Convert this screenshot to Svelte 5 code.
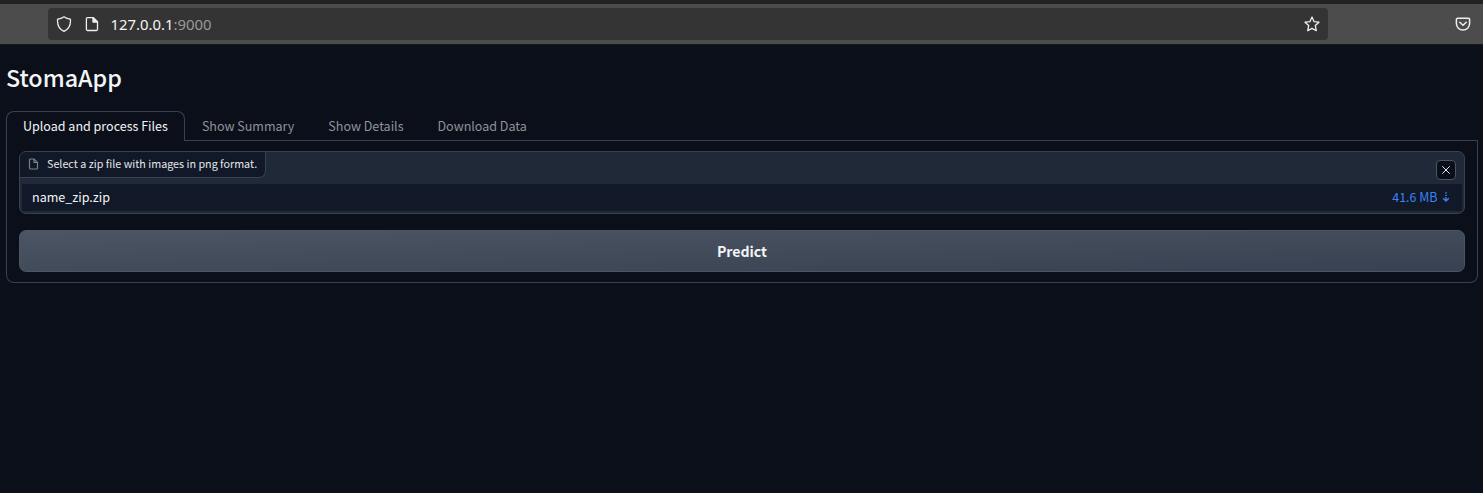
<script>
  const tabs = ['Upload and process Files', 'Show Summary', 'Show Details', 'Download Data'];
  let selected = $state(0);
</script>

<div class="window">
  <header class="toolbar">
    <div class="address">
      <svg class="shield" width="16" height="16" viewBox="0 0 16 16"><path d="M8 .8C10 2.2 12 2.9 14.4 3.2c.5 5.3-1.5 9.8-6.4 12.1C3.1 13 1.1 8.5 1.6 3.2 4 2.9 6 2.2 8 .8Z" /></svg>
      <svg class="page-icon" width="16" height="16" viewBox="0 0 16 16"><path d="M3.6 1.6h5.8l4.1 4.1v7.6a1.2 1.2 0 0 1-1.2 1.2H3.6a1.2 1.2 0 0 1-1.2-1.2V2.8a1.2 1.2 0 0 1 1.2-1.2Z" /><path class="fill" d="M9 1.6v4.5h4.5Z" /></svg>
      <span class="url">127.0.0.1<span class="port">:9000</span></span>
      <svg class="star" width="16" height="16" viewBox="0 0 16 16"><path d="m8 1.1 2 4.5 5 .6-3.7 3.4 1 5.1L8 12.4l-4.3 2.3 1-5.1L1 6.2l5-.6Z" /></svg>
    </div>
    <svg class="pocket" width="16" height="16" viewBox="0 0 16 16"><path d="M2.6 2.3h10.8a1.2 1.2 0 0 1 1.2 1.2v4a6.6 6.6 0 0 1-13.2 0v-4a1.2 1.2 0 0 1 1.2-1.2Z" /><path d="m4.8 6.3 3.2 3 3.2-3" /></svg>
  </header>

  <main>
    <h1>StomaApp</h1>
    <nav>
      {#each tabs as tab, i}
        <button class="tab" class:selected={selected === i} onclick={() => (selected = i)}><span>{tab}</span></button>
      {/each}
      <div class="rule"></div>
    </nav>
    <section class="panel">
      <div class="upload">
        <div class="upload-head">
          <div class="label">
            <svg width="11" height="12" viewBox="0 0 22 24"><path d="M12 2H5a2 2 0 0 0-2 2v16a2 2 0 0 0 2 2h12a2 2 0 0 0 2-2V9Z" /><path d="M12 2v7h7" /></svg>
            <span>Select a zip file with images in png format.</span>
          </div>
          <button class="clear" aria-label="Clear"><svg width="10" height="10" viewBox="0 0 10 10"><path d="m1.3 1.3 7.4 7.4m0-7.4L1.3 8.7" /></svg></button>
        </div>
        <div class="file">
          <span class="name">name_zip.zip</span>
          <a href="#download"><span class="size">41.6 MB</span><svg width="8" height="12" viewBox="0 0 8 12"><path d="M4 1v1.4M4 3.4v1.6M4 6v4M1.2 7.3 4 10.1l2.8-2.8" /></svg></a>
        </div>
      </div>
      <button class="predict"><span>Predict</span></button>
    </section>
  </main>
</div>

<style>
  :global(body) { background: #0b0f19; }
  * { box-sizing: border-box; }
  .window { height: 493px; background: #0b0f19; font-family: "Noto Sans CJK SC", "Noto Sans", sans-serif; color: #f3f4f6; overflow: hidden; }
  button { font: inherit; color: inherit; margin: 0; padding: 0; cursor: pointer; }
  svg { fill: none; stroke: currentColor; display: block; flex: none; }
  span { white-space: nowrap; }
  .toolbar { height: 45px; border-top: 4px solid #222; border-bottom: 1px solid #141720; background: #4c4c4c; display: flex; align-items: center; padding: 0 12px 0 48px; color: #eee; }
  .address { width: 1280px; height: 32px; background: #343434; border-radius: 4px; display: flex; align-items: center; padding: 0 8px; }
  .toolbar svg { stroke-width: 1.3; stroke-linejoin: round; stroke-linecap: round; }
  .toolbar .pocket { stroke-width: 1.5; }
  .page-icon { margin-left: 12px; }
  .fill { fill: currentColor; }
  .url { font: 14.9px/20px "Noto Sans", sans-serif; margin-left: 10.5px; color: #f5f5f5; }
  .port { color: #999; }
  .star { margin-left: auto; }
  .pocket { margin-left: auto; }
  main { padding: 0 5px 0 6px; }
  h1 { margin: 0; padding-top: 16px; height: 66px; font-size: 23.3px; line-height: 32px; font-weight: 500; }
  nav { display: flex; height: 30px; }
  .tab { background: none; border: solid #374151; border-width: 0 0 1px; padding: 0 17px; font-size: 12.52px; line-height: 29px; color: #8f939b; display: block; }
  .tab span { position: relative; top: -.5px; }
  .tab.selected { padding: 0 16px; line-height: 28px; color: #f3f4f6; border-width: 1px 1px 0; border-radius: 8px 8px 0 0; }
  .rule { flex: 1; border-bottom: 1px solid #374151; }
  .panel { height: 142px; border: 1px solid #374151; border-top: 0; border-radius: 0 0 8px 8px; padding: 10px 12px; }
  .upload { height: 63px; border: 1px solid #374151; border-radius: 7px; background: #1f2937; overflow: hidden; padding: 0 2px 2px; }
  .upload-head { height: 32px; display: flex; justify-content: space-between; margin-left: -2px; padding-right: 6px; }
  .label { width: 246px; height: 26px; border: solid #374151; border-width: 0 1px 1px 0; border-radius: 0 0 7px; background: #111827; display: flex; align-items: center; padding: 0 0 1px 8px; gap: 8px; font-size: 10.75px; line-height: 18px; color: #e5e7eb; }
  .label svg { stroke: #7c828e; stroke-width: 2.4; }
  .clear { width: 20px; height: 20px; margin-top: 8px; border: 1px solid #4b5563; border-radius: 4px; background: #0b0f19; color: #e5e7eb; display: grid; place-items: center; }
  .file { height: 27px; background: #111827; display: flex; align-items: center; justify-content: space-between; padding: 0 12px 1px 10px; font-size: 12.55px; line-height: 20px; }
  .file a { color: #3b82f6; text-decoration: none; display: flex; align-items: center; gap: 4.5px; }
  .file a svg { stroke-width: 1.3; }
  .size { font-size: 12.45px; }
  .predict { display: block; width: 100%; height: 42px; margin-top: 16px; border: 1px solid #4b5563; border-radius: 7px; background: linear-gradient(to bottom right, #4b5563, #374151); font-size: 14.1px; line-height: 40px; font-weight: 700; }
</style>
